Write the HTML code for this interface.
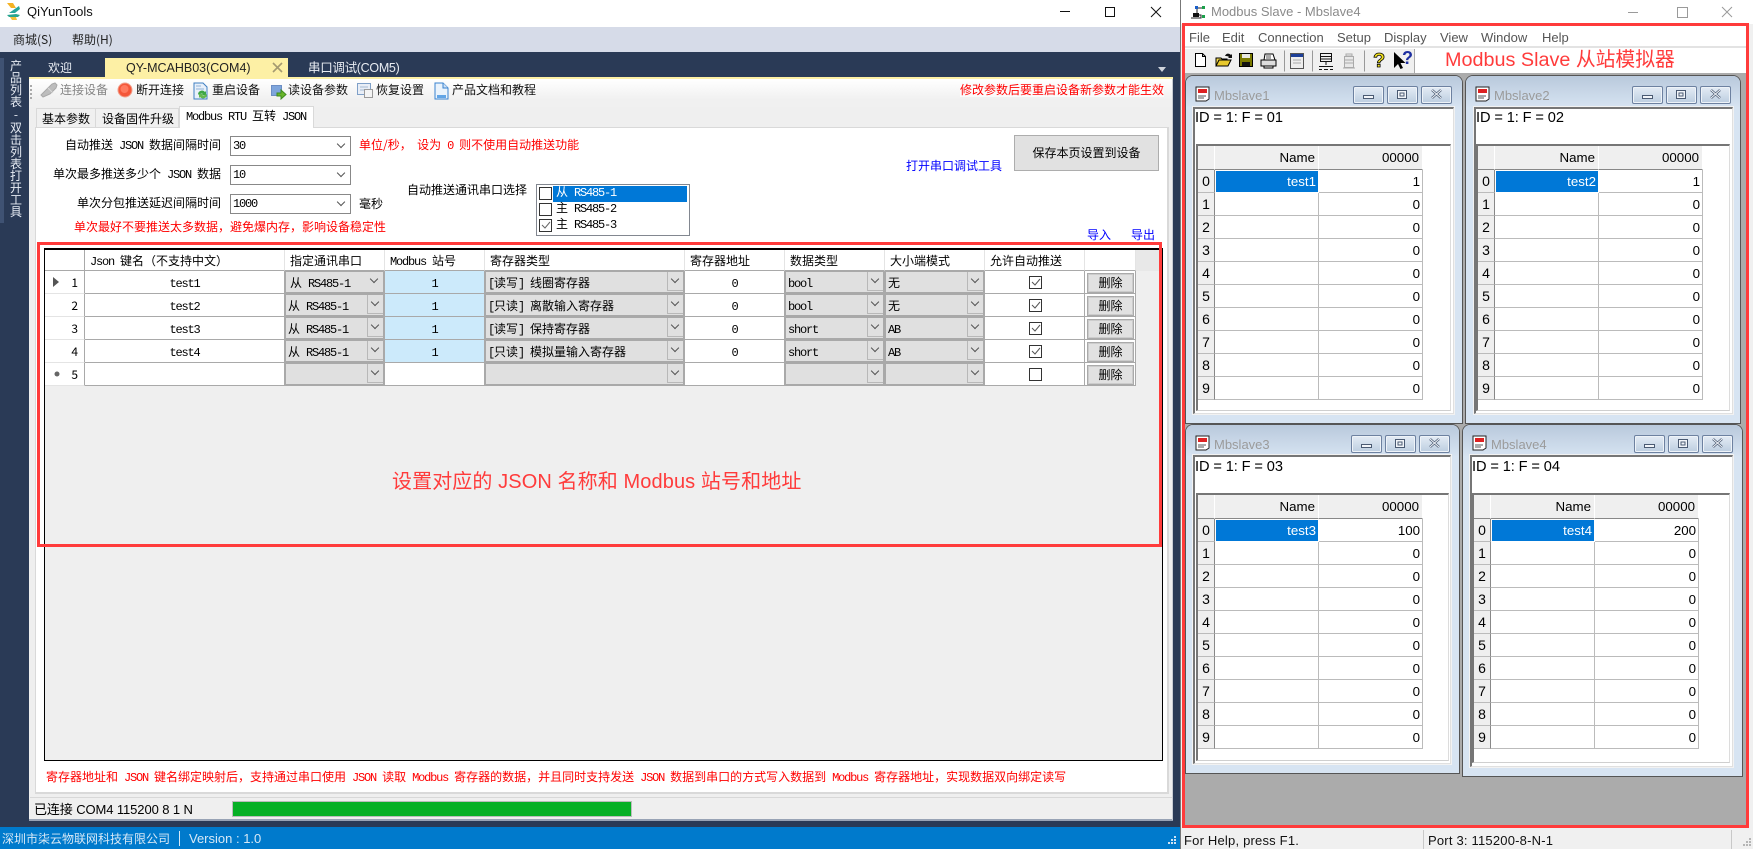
<!DOCTYPE html>
<html><head><meta charset="utf-8"><title>QiYunTools</title>
<style>
html,body{margin:0;padding:0;width:1753px;height:849px;overflow:hidden;background:#fff}
body{position:relative;font-family:"Liberation Sans","WenQuanYi Zen Hei","Noto Sans CJK SC",sans-serif;font-size:12px;color:#000}
.a{position:absolute}
.t{position:absolute;white-space:pre;line-height:14px;font-family:"WenQuanYi Zen Hei","Noto Sans CJK SC",sans-serif;font-size:12px}
.t i,td i{font-style:normal;font-family:"Liberation Mono",monospace;letter-spacing:-1.2px;white-space:pre}
.r{color:#f00}.b{color:#00f}
.cb{position:absolute;background:#fff;border:1px solid #888;box-sizing:border-box}
.cb:after,.dd:after{content:"";position:absolute;width:5px;height:5px;border-right:1px solid #555;border-bottom:1px solid #555;transform:rotate(45deg)}
.cb:after{right:6px;top:4px}
.chk{position:absolute;width:13px;height:13px;box-sizing:border-box;border:1px solid #333;background:#fff}
.chk svg{position:absolute;left:0;top:0}
#grid{position:absolute;left:45px;top:250px;border-collapse:separate;border-spacing:0;table-layout:fixed;background:#fff;font-family:"WenQuanYi Zen Hei","Noto Sans CJK SC",sans-serif;font-size:12px}
#grid td{box-sizing:border-box;height:23px;padding:1px 0 0;border-right:1px solid #a9a9a9;border-bottom:1px solid #a9a9a9;position:relative;white-space:pre;text-align:center}
#grid tr.h td{height:21px;text-align:left;padding:0 0 0 5px;border-right:1px solid #e4e4e4;border-bottom:1px solid #a9a9a9}
#grid td.n{border-right:1px solid #a9a9a9;border-bottom:1px solid #e4e4e4;text-align:right;padding:0 6px 0 0}
#grid td.bl{background:#cceafb}
#grid td.c{background:#e0e0e0;border:2px solid #a9a9a9;border-left-width:1px;border-top-width:1px;text-align:left;padding:0 0 0 2px}
.dd{position:absolute;right:0;top:0;width:16px;height:19px;border-left:1px solid #b8b8b8;border-bottom:1px solid #b8b8b8;box-sizing:border-box}
.dd:after{left:4px;top:4px}
.del{position:absolute;left:2px;top:2px;width:47px;height:20px;box-sizing:border-box;background:#e1e1e1;border:1px solid #aaa;outline:1px solid #ccc;outline-offset:-2px;line-height:18px;text-align:center}
.ic{position:absolute}
.w{position:absolute;background:#d7e4f2;box-sizing:border-box;border:1px solid #555;border-radius:8px 8px 0 0;overflow:hidden}
.tb{position:absolute;left:0;right:0;top:0;height:32px;background:linear-gradient(#b9c9dc,#d7e4f2)}
.wt{position:absolute;font:13px/16px "Liberation Sans",sans-serif;color:#9b9b9b;white-space:pre}
.wb{position:absolute;width:31px;height:18px;top:10px;box-sizing:border-box;border:1px solid #6d81a0;border-radius:2px;background:linear-gradient(#e4ecf5,#bccde0);box-shadow:inset 0 0 0 1px #eef3f8}
.wb svg{position:absolute;left:0;top:0}
.cl{position:absolute;background:#fff;box-sizing:border-box;border-left:2px solid #767676;border-top:2px solid #767676;border-right:1px solid #e0e0e0;border-bottom:1px solid #e0e0e0;outline:1px solid #f2f2f2}
.fr{position:absolute;box-sizing:border-box;border-left:2px solid #767676;border-top:2px solid #767676;border-right:1px solid #dcdcdc;border-bottom:1px solid #cfcfcf;background:#fff}
.id{position:absolute;font:14.6px/18px "Liberation Sans",sans-serif;white-space:pre;letter-spacing:-.1px}
.sg{position:absolute;border-collapse:separate;border-spacing:0;table-layout:fixed;font:13.3px "Liberation Sans",sans-serif}
.sg td{box-sizing:border-box;height:23px;padding:0 2px 0 0;border-right:1px solid #bbb;border-bottom:1px solid #bbb;text-align:right;background:#fff}
.sg td.hd{background:#efefef;padding-right:3px;border-right:1px solid #fff;border-bottom:1px solid #888}
.sg tr.hr td{height:24px}
.sg td.nm{background:#efefef;text-align:center;padding:0;font-size:14px;border-right:1px solid #888;border-bottom:1px solid #bbb}
.sg td.se{background:#0078d7;color:#fff;border:1px solid #fff}
</style></head><body>

<!-- LEFT APP -->
<div class="a" style="left:0;top:0;width:1180px;height:27px;background:#fff"></div>
<svg class="ic" style="left:6px;top:3px" width="15" height="17" viewBox="0 0 15 17"><path d="M1 0h6l3 5H5z" fill="#f5b223"/><path d="M13 3L3 10h6l5-4z" fill="#26a59a"/><path d="M1 12l9-1 4 1-2 2H3z" fill="#2aa58f"/><path d="M4 14l6 0 1 3H6z" fill="#f2c037"/></svg>
<div class="a" style="left:27px;top:4px;font:13px/16px 'Liberation Sans',sans-serif;color:#111;white-space:pre">QiYunTools</div>
<svg class="ic" style="left:1055px;top:3px" width="115" height="18" viewBox="0 0 115 18" fill="none" stroke="#111"><path d="M5 8.500h10"/><rect x="50.500" y="4.500" width="9" height="9"/><path d="M96 4l10 10M106 4l-10 10"/></svg>

<div class="a" style="left:0;top:27px;width:1180px;height:25px;background:#d6dbe8"></div>
<div class="t" style="left:13px;top:33px;color:#222">商城(S)</div>
<div class="t" style="left:72px;top:33px;color:#222">帮助(H)</div>

<div class="a" style="left:0;top:52px;width:1180px;height:775px;background:#2a3a56"></div>
<div class="a" style="left:0;top:58px;width:4px;height:165px;background:#3f5273"></div>
<div class="t" style="left:9px;top:60px;width:14px;white-space:normal;line-height:12px;color:#e6ebf3;text-align:center">产品列表</div>
<div class="t" style="left:9px;top:108px;width:14px;line-height:14px;color:#e6ebf3;text-align:center">-</div>
<div class="t" style="left:9px;top:122px;width:14px;white-space:normal;line-height:12px;color:#e6ebf3;text-align:center">双击列表打开工具</div>

<div class="t" style="left:48px;top:61px;color:#e8ecf2">欢迎</div>
<div class="a" style="left:105px;top:58px;width:183px;height:20px;background:#fdf0a5"></div>
<div class="a" style="left:126px;top:60px;font:12.5px/16px 'Liberation Sans',sans-serif;color:#222;white-space:pre">QY-MCAHB03(COM4)</div>
<svg class="ic" style="left:272px;top:62px" width="11" height="11" viewBox="0 0 11 11" stroke="#a59a70" stroke-width="1.6"><path d="M1 1l9 9M10 1l-9 9"/></svg>
<div class="a" style="left:308px;top:60px;font:12.5px/16px 'Liberation Sans','WenQuanYi Zen Hei',sans-serif;color:#e8ecf2;white-space:pre;letter-spacing:-.3px">串口调试(COM5)</div>
<svg class="ic" style="left:1157px;top:67px" width="10" height="6"><path d="M1 0h8l-4 5z" fill="#cfd4dc"/></svg>

<div class="a" style="left:29px;top:77px;width:1144px;height:743px;background:#efefef;border-top:2px solid #fdf0a5;box-sizing:border-box"></div>
<div class="a" style="left:29px;top:79px;width:1144px;height:28px;background:linear-gradient(#fff,#f0f0f0 75%)"></div>
<div class="a" style="left:29px;top:819px;width:1144px;height:2px;background:#98a3b5"></div>
<div class="a" style="left:1172px;top:79px;width:1px;height:741px;background:#c8ccd3"></div>
<div class="a" style="left:30px;top:85px;width:2px;height:14px;border-left:2px dotted #aaa"></div>

<svg class="ic" style="left:40px;top:82px" width="19" height="17" viewBox="0 0 19 17"><path d="M3 15L1 13l5-5 3-3 3-3 3-1 2 2-1 3-3 3-3 3z" fill="#bdbdbd" stroke="#a8a8a8"/><path d="M8 6l5 5" stroke="#d8d8d8"/></svg>
<div class="t" style="left:60px;top:83px;color:#858585">连接设备</div>
<svg class="ic" style="left:117px;top:82px" width="16" height="16"><circle cx="8" cy="8" r="7" fill="#f4573a" stroke="#f1a08c"/><circle cx="7.500" cy="7" r="4" fill="#ff7a5f"/></svg>
<div class="t" style="left:136px;top:83px;color:#111">断开连接</div>
<svg class="ic" style="left:193px;top:82px" width="16" height="18" viewBox="0 0 16 18"><path d="M1 1h9l4 4v12H1z" fill="#e8f0fa" stroke="#3f7fc2"/><path d="M3 4h5M3 7h8" stroke="#8fb2d8"/><path d="M5 12a4 4 0 017-2l1-1v4H9l1-1a3 3 0 00-4 1z" fill="#3da744"/><path d="M14 13a4 4 0 01-7 2l-1 1v-4h4l-1 1a3 3 0 004-1z" fill="#64b84d"/></svg>
<div class="t" style="left:212px;top:83px;color:#111">重启设备</div>
<svg class="ic" style="left:271px;top:84px" width="16" height="16" viewBox="0 0 16 16"><rect x="0.500" y="1.500" width="10" height="10" fill="#7ea5dc" stroke="#6c8ec4"/><path d="M6 9h4V6l5 4.500-5 4.500v-3H6z" fill="#69b52a" stroke="#3d8b1e"/></svg>
<div class="t" style="left:288px;top:83px;color:#111">读设备参数</div>
<svg class="ic" style="left:357px;top:82px" width="17" height="17" viewBox="0 0 17 17"><rect x="0.500" y="1.500" width="13" height="11" fill="#e9eef6" stroke="#7fa0c8"/><path d="M3 5h8M3 8h5" stroke="#a5bad3"/><rect x="7.500" y="7.500" width="8" height="8" fill="#f4f4f4" stroke="#9a9a9a"/></svg>
<div class="t" style="left:376px;top:83px;color:#111">恢复设置</div>
<svg class="ic" style="left:434px;top:82px" width="15" height="18" viewBox="0 0 15 18"><path d="M1 1h8l5 5v11H1z" fill="#eaf3fc" stroke="#3a83cf"/><path d="M9 1v5h5" fill="#cfe2f6" stroke="#3a83cf"/><path d="M3 13h9v3H3z" fill="#62a5e6"/></svg>
<div class="t" style="left:452px;top:83px;color:#111">产品文档和教程</div>
<div class="t r" style="left:960px;top:83px;background:#fbfbfb">修改参数后要重启设备新参数才能生效</div>

<!-- tabs -->
<div class="a" style="left:35px;top:127px;width:1134px;height:667px;background:#fff;border:1px solid #d9d9d9;box-sizing:border-box;border-width:1px 2px 2px 1px"></div>
<div class="a" style="left:36px;top:108px;width:60px;height:19px;background:#f0f0f0;border:1px solid #d9d9d9;border-bottom:0;box-sizing:border-box"></div>
<div class="a" style="left:96px;top:108px;width:83px;height:19px;background:#f0f0f0;border:1px solid #d9d9d9;border-left:0;border-bottom:0;box-sizing:border-box"></div>
<div class="a" style="left:179px;top:106px;width:135px;height:22px;background:#fff;border:1px solid #d9d9d9;border-bottom:0;box-sizing:border-box"></div>
<div class="t" style="left:42px;top:112px">基本参数</div>
<div class="t" style="left:102px;top:112px">设备固件升级</div>
<div class="t" style="left:186px;top:109px"><i>Modbus RTU </i>互转<i> JSON</i></div>

<!-- form -->
<div class="t" style="left:65px;top:138px"><span>自动推送</span><i> JSON </i>数据间隔时间</div>
<div class="t" style="left:53px;top:167px">单次最多推送多少个<i> JSON </i>数据</div>
<div class="t" style="left:77px;top:196px">单次分包推送延迟间隔时间</div>
<div class="cb" style="left:230px;top:136px;width:121px;height:20px"></div>
<div class="cb" style="left:230px;top:165px;width:121px;height:20px"></div>
<div class="cb" style="left:230px;top:194px;width:121px;height:20px"></div>
<div class="t" style="left:233px;top:138px"><i>30</i></div>
<div class="t" style="left:233px;top:167px"><i>10</i></div>
<div class="t" style="left:233px;top:196px"><i>1000</i></div>
<div class="t r" style="left:359px;top:138px">单位/秒，  设为<i> 0 </i>则不使用自动推送功能</div>
<div class="t" style="left:359px;top:197px">毫秒</div>
<div class="t r" style="left:74px;top:220px">单次最好不要推送太多数据，避免爆内存，影响设备稳定性</div>
<div class="t" style="left:407px;top:183px">自动推送通讯串口选择</div>

<div class="a" style="left:536px;top:184px;width:154px;height:52px;background:#fff;border:1px solid #828790;box-sizing:border-box"></div>
<div class="a" style="left:553px;top:186px;width:134px;height:16px;background:#0078d7"></div>
<div class="chk" style="left:539px;top:187px"></div>
<div class="chk" style="left:539px;top:203px"></div>
<div class="chk" style="left:539px;top:219px"><svg width="11" height="11"><path d="M2 5l3 3 5-6" fill="none" stroke="#666"/></svg></div>
<div class="t" style="left:556px;top:185px;color:#fff">从<i> RS485-1</i></div>
<div class="t" style="left:556px;top:201px">主<i> RS485-2</i></div>
<div class="t" style="left:556px;top:217px">主<i> RS485-3</i></div>

<div class="t b" style="left:906px;top:159px">打开串口调试工具</div>
<div class="a" style="left:1014px;top:135px;width:145px;height:36px;background:#e1e1e1;border:1px solid #adadad;box-sizing:border-box;outline:0;text-align:center;line-height:34px;font-family:'WenQuanYi Zen Hei','Noto Sans CJK SC',sans-serif">保存本页设置到设备</div>
<div class="t b" style="left:1087px;top:228px">导入</div>
<div class="t b" style="left:1131px;top:228px">导出</div>

<!-- grid -->
<div class="a" style="left:44px;top:248px;width:1119px;height:513px;background:#efefef;border:1px solid #000;border-top-width:2px;box-sizing:border-box"></div>
<div class="a" style="left:1136px;top:250px;width:26px;height:21px;background:#e8e8e8"></div>
<table id="grid"><colgroup><col style="width:40px"><col style="width:200px"><col style="width:100px"><col style="width:100px"><col style="width:200px"><col style="width:100px"><col style="width:100px"><col style="width:100px"><col style="width:100px"><col style="width:51px"></colgroup>
<tr class="h"><td style="border-right-color:#a9a9a9"></td><td><i>Json </i>键名（不支持中文）</td><td>指定通讯串口</td><td><i>Modbus </i>站号</td><td>寄存器类型</td><td>寄存器地址</td><td>数据类型</td><td>大小端模式</td><td>允许自动推送</td><td></td></tr>
<tr><td class="n">1<svg class="ic" style="left:8px;top:6px" width="7" height="10"><path d="M0 0l6 5-6 5z" fill="#555"/></svg></td><td><i>test1</i></td><td class="c" style="padding-left:4px;border-bottom-color:#a9a9a9">从<i> RS485-1</i><span class="dd" style="border:0"></span></td><td class="bl"><i>1</i></td><td class="c"><i>[</i>读写<i>] </i>线圈寄存器<span class="dd"></span></td><td><i>0</i></td><td class="c"><i>bool</i><span class="dd"></span></td><td class="c">无<span class="dd"></span></td><td><div class="chk" style="left:44px;top:5px"><svg width="11" height="11"><path d="M2 5l3 3 5-6" fill="none" stroke="#555"/></svg></div></td><td><div class="del">删除</div></td></tr>
<tr><td class="n">2</td><td><i>test2</i></td><td class="c">从<i> RS485-1</i><span class="dd"></span></td><td class="bl"><i>1</i></td><td class="c"><i>[</i>只读<i>] </i>离散输入寄存器<span class="dd"></span></td><td><i>0</i></td><td class="c"><i>bool</i><span class="dd"></span></td><td class="c">无<span class="dd"></span></td><td><div class="chk" style="left:44px;top:5px"><svg width="11" height="11"><path d="M2 5l3 3 5-6" fill="none" stroke="#555"/></svg></div></td><td><div class="del">删除</div></td></tr>
<tr><td class="n">3</td><td><i>test3</i></td><td class="c">从<i> RS485-1</i><span class="dd"></span></td><td class="bl"><i>1</i></td><td class="c"><i>[</i>读写<i>] </i>保持寄存器<span class="dd"></span></td><td><i>0</i></td><td class="c"><i>short</i><span class="dd"></span></td><td class="c"><i>AB</i><span class="dd"></span></td><td><div class="chk" style="left:44px;top:5px"><svg width="11" height="11"><path d="M2 5l3 3 5-6" fill="none" stroke="#555"/></svg></div></td><td><div class="del">删除</div></td></tr>
<tr><td class="n">4</td><td><i>test4</i></td><td class="c">从<i> RS485-1</i><span class="dd"></span></td><td class="bl"><i>1</i></td><td class="c"><i>[</i>只读<i>] </i>模拟量输入寄存器<span class="dd"></span></td><td><i>0</i></td><td class="c"><i>short</i><span class="dd"></span></td><td class="c"><i>AB</i><span class="dd"></span></td><td><div class="chk" style="left:44px;top:5px"><svg width="11" height="11"><path d="M2 5l3 3 5-6" fill="none" stroke="#555"/></svg></div></td><td><div class="del">删除</div></td></tr>
<tr><td class="n" style="border-bottom-color:#e4e4e4">5<svg class="ic" style="left:9px;top:8px" width="6" height="6"><circle cx="3" cy="3" r="2.500" fill="#666"/></svg></td><td></td><td class="c"><span class="dd"></span></td><td></td><td class="c"><span class="dd"></span></td><td></td><td class="c"><span class="dd"></span></td><td class="c"><span class="dd"></span></td><td><div class="chk" style="left:44px;top:5px"></div></td><td><div class="del">删除</div></td></tr>
</table>

<div class="a" style="left:392px;top:469px;font:20px/26px 'Liberation Sans','Noto Sans CJK SC',sans-serif;color:#ff3b3b;white-space:pre;letter-spacing:.1px">设置对应的 JSON 名称和 Modbus 站号和地址</div>
<div class="a" style="left:37px;top:242px;width:1125px;height:305px;border:3px solid #ff3b3b;box-sizing:border-box"></div>

<div class="t r" style="left:46px;top:770px">寄存器地址和<i> JSON </i>键名绑定映射后，支持通过串口使用<i> JSON </i>读取<i> Modbus </i>寄存器的数据，并且同时支持发送<i> JSON </i>数据到串口的方式写入数据到<i> Modbus </i>寄存器地址，实现数据双向绑定读写</div>

<!-- status -->
<div class="a" style="left:30px;top:797px;width:1142px;height:1px;background:#d8d8d8"></div>
<div class="a" style="left:34px;top:802px;font:13px/16px 'Liberation Sans','WenQuanYi Zen Hei',sans-serif;white-space:pre;letter-spacing:-.1px">已连接 COM4 115200 8 1 N</div>
<div class="a" style="left:232px;top:801px;width:400px;height:16px;background:#06b025;border:1px solid #bcbcbc;box-sizing:border-box"></div>

<div class="a" style="left:0;top:827px;width:1180px;height:22px;background:#007acc"></div>
<div class="a" style="left:2px;top:831px;font:12px/16px 'Liberation Sans','WenQuanYi Zen Hei',sans-serif;color:#d6e8f6;white-space:pre">深圳市柒云物联网科技有限公司</div>
<div class="a" style="left:179px;top:831px;width:1px;height:15px;background:#d6e8f6"></div>
<div class="a" style="left:189px;top:831px;font:13px/16px 'Liberation Sans',sans-serif;color:#d6e8f6;white-space:pre">Version : 1.0</div>
<svg class="ic" style="left:1167px;top:836px" width="10" height="10" fill="#cfe3f3"><rect x="7" y="0" width="2" height="2"/><rect x="4" y="3" width="2" height="2"/><rect x="7" y="3" width="2" height="2"/><rect x="1" y="6" width="2" height="2"/><rect x="4" y="6" width="2" height="2"/><rect x="7" y="6" width="2" height="2"/></svg>

<!-- RIGHT APP -->
<div class="a" style="left:1180px;top:0;width:573px;height:849px;background:#f0f0f0;border-left:1px solid #777;box-sizing:border-box"></div>
<div class="a" style="left:1181px;top:0;width:572px;height:24px;background:#fff"></div>
<svg class="ic" style="left:1190px;top:5px" width="15" height="14" viewBox="0 0 15 14"><path d="M1 13h10V10H7V3h6" fill="none" stroke="#222"/><rect x="3" y="8" width="6" height="4" fill="#111"/><rect x="5" y="1" width="3" height="3" fill="#1a5fc9"/><rect x="12" y="1" width="3" height="3" fill="#1aa04a"/><rect x="12" y="10" width="3" height="3" fill="#1aa04a"/></svg>
<div class="a" style="left:1211px;top:4px;font:13px/16px 'Liberation Sans',sans-serif;color:#8a8a8a;white-space:pre">Modbus Slave - Mbslave4</div>
<svg class="ic" style="left:1625px;top:3px" width="115" height="18" viewBox="0 0 115 18" fill="none" stroke="#9a9a9a"><path d="M3 9.500h10"/><rect x="52.500" y="4.500" width="10" height="10"/><path d="M97 4l10 10M107 4l-10 10"/></svg>

<div class="a" style="left:1182px;top:24px;width:567px;height:22px;background:#fff"></div>
<div class="a" style="left:1182px;top:46px;width:567px;height:2px;background:#e3e3e3"></div>
<div class="a" style="left:1182px;top:48px;width:567px;height:26px;background:#fff"></div>
<div class="a" style="left:1185px;top:49px;width:229px;height:24px;background:#f0f0f0;border-right:1px solid #aaa"></div>
<div class="a" style="left:1182px;top:73px;width:567px;height:754px;background:#ababab"></div>
<div class="a" style="left:1189px;top:30px;font:13px/16px 'Liberation Sans',sans-serif;color:#555;white-space:pre">File</div>
<div class="a" style="left:1222px;top:30px;font:13px/16px 'Liberation Sans',sans-serif;color:#555;white-space:pre">Edit</div>
<div class="a" style="left:1258px;top:30px;font:13px/16px 'Liberation Sans',sans-serif;color:#555;white-space:pre">Connection</div>
<div class="a" style="left:1337px;top:30px;font:13px/16px 'Liberation Sans',sans-serif;color:#555;white-space:pre">Setup</div>
<div class="a" style="left:1384px;top:30px;font:13px/16px 'Liberation Sans',sans-serif;color:#555;white-space:pre">Display</div>
<div class="a" style="left:1440px;top:30px;font:13px/16px 'Liberation Sans',sans-serif;color:#555;white-space:pre">View</div>
<div class="a" style="left:1481px;top:30px;font:13px/16px 'Liberation Sans',sans-serif;color:#555;white-space:pre">Window</div>
<div class="a" style="left:1542px;top:30px;font:13px/16px 'Liberation Sans',sans-serif;color:#555;white-space:pre">Help</div>

<svg class="ic" style="left:1185px;top:49px" width="228" height="24" viewBox="0 0 228 24" fill="none">
<path d="M10.500 4.500h7l3 3v10h-10zM17.500 4.500v3h3" fill="#fff" stroke="#000"/>
<path d="M31 17V9h5l1 1h5v2" fill="#f2d94a" stroke="#000"/><path d="M31 17l3-6h12l-3 6z" fill="#e8c92e" stroke="#000"/><path d="M40 7c1-3 4-3 6-1l1-1v4h-4l1-1c-1-1-3-1-4-1z" fill="#111"/>
<rect x="54.500" y="4.500" width="13" height="13" fill="#7a7a00" stroke="#000"/><rect x="57" y="5" width="8" height="4" fill="#e8e8e0"/><rect x="57" y="13" width="8" height="4" fill="#111"/>
<path d="M76 11h15v6H76z" fill="#ddd" stroke="#000"/><path d="M79 11l1-6h8l2 6z" fill="#fff" stroke="#000"/><path d="M79 17h9v2h-9z" fill="#fff" stroke="#000"/><path d="M81 7h5M81 9h5" stroke="#555"/>
<path d="M99.500 1.500v21" stroke="#999"/>
<rect x="105.500" y="4.500" width="13" height="15" fill="#eee" stroke="#555"/><rect x="106" y="5" width="12" height="3" fill="#1d3f98"/><path d="M108 11h8M108 14h8" stroke="#aaa"/>
<path d="M127.500 1.500v21" stroke="#999"/>
<path d="M135.500 4.500h11v8h-11zM136 7.500h10M136 10h10M141 13v3M134 17.500h14" stroke="#111"/><path d="M134 20.500h3M139 20.500h4M145 20.500h3" stroke="#111"/>
<rect x="159.500" y="7.500" width="9" height="11" fill="#e8e8e8" stroke="#aaa"/><path d="M161 5h6v2h-6zM160 11h8M160 14h8M158 19h12" stroke="#aaa"/>
<path d="M179.500 1.500v21" stroke="#999"/>
<text x="188" y="18" font-family="Liberation Sans" font-weight="700" font-size="20" fill="#f0e020" stroke="#000" stroke-width=".8">?</text>
<path d="M209 3v16l4-4 2.500 5 2.500-1-2.500-5h5z" fill="#000"/><text x="217" y="15" font-family="Liberation Sans" font-weight="700" font-size="18" fill="#1d2fa0">?</text>
</svg>

<div class="a" style="left:1445px;top:47px;font:19.800px/26px 'Liberation Sans','Noto Sans CJK SC',sans-serif;color:#ff3b3b;white-space:pre">Modbus Slave 从站模拟器</div>

<!-- Mbslave1 -->
<div class="w" style="left:1185px;top:75px;width:278px;height:349px"><div class="tb"></div>
<svg class="ic" style="left:9px;top:10px" width="15" height="16" viewBox="0 0 15 16"><path d="M1 1h13v12l-3 2H1z" fill="#fff" stroke="#222"/><rect x="3" y="3" width="9" height="4" fill="#d22"/><path d="M3 10h8M3 12h6" stroke="#555"/></svg>
<div class="wt" style="left:28px;top:12px">Mbslave1</div>
<div class="wb" style="left:167px"><svg width="29" height="16"><rect x="9.500" y="8.500" width="10" height="3" fill="#f2f5f9" stroke="#4a5a72"/></svg></div>
<div class="wb" style="left:201px"><svg width="29" height="16"><rect x="9.500" y="3.500" width="9" height="8" fill="#f2f5f9" stroke="#4a5a72"/><rect x="12" y="6" width="4" height="3" fill="none" stroke="#4a5a72"/></svg></div>
<div class="wb" style="left:235px"><svg width="29" height="16"><path d="M10 3l9 8M19 3l-9 8" stroke="#4a5a72" stroke-width="2.500"/><path d="M10 3l9 8M19 3l-9 8" stroke="#f2f5f9"/></svg></div>
<div class="cl" style="left:7px;top:31px;width:261px;height:307px"></div>
<div class="id" style="left:9px;top:33px">ID = 1: F = 01</div>
<div class="fr" style="left:10px;top:68px;width:255px;height:267px"></div>
<table class="sg" style="left:12px;top:70px"><colgroup><col style="width:17px"><col style="width:104px"><col style="width:104px"></colgroup>
<tr class="hr"><td class="hd"></td><td class="hd">Name</td><td class="hd">00000</td></tr>
<tr><td class="nm">0</td><td class="se">test1</td><td>1</td></tr>
<tr><td class="nm">1</td><td></td><td>0</td></tr><tr><td class="nm">2</td><td></td><td>0</td></tr><tr><td class="nm">3</td><td></td><td>0</td></tr><tr><td class="nm">4</td><td></td><td>0</td></tr><tr><td class="nm">5</td><td></td><td>0</td></tr><tr><td class="nm">6</td><td></td><td>0</td></tr><tr><td class="nm">7</td><td></td><td>0</td></tr><tr><td class="nm">8</td><td></td><td>0</td></tr><tr><td class="nm">9</td><td></td><td>0</td></tr>
</table></div>

<!-- Mbslave2 -->
<div class="w" style="left:1465px;top:75px;width:276px;height:349px"><div class="tb"></div>
<svg class="ic" style="left:9px;top:10px" width="15" height="16" viewBox="0 0 15 16"><path d="M1 1h13v12l-3 2H1z" fill="#fff" stroke="#222"/><rect x="3" y="3" width="9" height="4" fill="#d22"/><path d="M3 10h8M3 12h6" stroke="#555"/></svg>
<div class="wt" style="left:28px;top:12px">Mbslave2</div>
<div class="wb" style="left:166px"><svg width="29" height="16"><rect x="9.500" y="8.500" width="10" height="3" fill="#f2f5f9" stroke="#4a5a72"/></svg></div>
<div class="wb" style="left:200px"><svg width="29" height="16"><rect x="9.500" y="3.500" width="9" height="8" fill="#f2f5f9" stroke="#4a5a72"/><rect x="12" y="6" width="4" height="3" fill="none" stroke="#4a5a72"/></svg></div>
<div class="wb" style="left:234px"><svg width="29" height="16"><path d="M10 3l9 8M19 3l-9 8" stroke="#4a5a72" stroke-width="2.500"/><path d="M10 3l9 8M19 3l-9 8" stroke="#f2f5f9"/></svg></div>
<div class="cl" style="left:8px;top:31px;width:259px;height:307px"></div>
<div class="id" style="left:10px;top:33px">ID = 1: F = 02</div>
<div class="fr" style="left:10px;top:68px;width:254px;height:267px"></div>
<table class="sg" style="left:12px;top:70px"><colgroup><col style="width:17px"><col style="width:104px"><col style="width:104px"></colgroup>
<tr class="hr"><td class="hd"></td><td class="hd">Name</td><td class="hd">00000</td></tr>
<tr><td class="nm">0</td><td class="se">test2</td><td>1</td></tr>
<tr><td class="nm">1</td><td></td><td>0</td></tr><tr><td class="nm">2</td><td></td><td>0</td></tr><tr><td class="nm">3</td><td></td><td>0</td></tr><tr><td class="nm">4</td><td></td><td>0</td></tr><tr><td class="nm">5</td><td></td><td>0</td></tr><tr><td class="nm">6</td><td></td><td>0</td></tr><tr><td class="nm">7</td><td></td><td>0</td></tr><tr><td class="nm">8</td><td></td><td>0</td></tr><tr><td class="nm">9</td><td></td><td>0</td></tr>
</table></div>

<!-- Mbslave3 -->
<div class="w" style="left:1185px;top:424px;width:275px;height:350px"><div class="tb"></div>
<svg class="ic" style="left:9px;top:10px" width="15" height="16" viewBox="0 0 15 16"><path d="M1 1h13v12l-3 2H1z" fill="#fff" stroke="#222"/><rect x="3" y="3" width="9" height="4" fill="#d22"/><path d="M3 10h8M3 12h6" stroke="#555"/></svg>
<div class="wt" style="left:28px;top:12px">Mbslave3</div>
<div class="wb" style="left:165px"><svg width="29" height="16"><rect x="9.500" y="8.500" width="10" height="3" fill="#f2f5f9" stroke="#4a5a72"/></svg></div>
<div class="wb" style="left:199px"><svg width="29" height="16"><rect x="9.500" y="3.500" width="9" height="8" fill="#f2f5f9" stroke="#4a5a72"/><rect x="12" y="6" width="4" height="3" fill="none" stroke="#4a5a72"/></svg></div>
<div class="wb" style="left:233px"><svg width="29" height="16"><path d="M10 3l9 8M19 3l-9 8" stroke="#4a5a72" stroke-width="2.500"/><path d="M10 3l9 8M19 3l-9 8" stroke="#f2f5f9"/></svg></div>
<div class="cl" style="left:7px;top:30px;width:258px;height:309px"></div>
<div class="id" style="left:9px;top:33px">ID = 1: F = 03</div>
<div class="fr" style="left:10px;top:68px;width:253px;height:268px"></div>
<table class="sg" style="left:12px;top:70px"><colgroup><col style="width:17px"><col style="width:104px"><col style="width:104px"></colgroup>
<tr class="hr"><td class="hd"></td><td class="hd">Name</td><td class="hd">00000</td></tr>
<tr><td class="nm">0</td><td class="se">test3</td><td>100</td></tr>
<tr><td class="nm">1</td><td></td><td>0</td></tr><tr><td class="nm">2</td><td></td><td>0</td></tr><tr><td class="nm">3</td><td></td><td>0</td></tr><tr><td class="nm">4</td><td></td><td>0</td></tr><tr><td class="nm">5</td><td></td><td>0</td></tr><tr><td class="nm">6</td><td></td><td>0</td></tr><tr><td class="nm">7</td><td></td><td>0</td></tr><tr><td class="nm">8</td><td></td><td>0</td></tr><tr><td class="nm">9</td><td></td><td>0</td></tr>
</table></div>

<!-- Mbslave4 -->
<div class="w" style="left:1462px;top:424px;width:281px;height:353px"><div class="tb"></div>
<svg class="ic" style="left:9px;top:10px" width="15" height="16" viewBox="0 0 15 16"><path d="M1 1h13v12l-3 2H1z" fill="#fff" stroke="#222"/><rect x="3" y="3" width="9" height="4" fill="#d22"/><path d="M3 10h8M3 12h6" stroke="#555"/></svg>
<div class="wt" style="left:28px;top:12px">Mbslave4</div>
<div class="wb" style="left:171px"><svg width="29" height="16"><rect x="9.500" y="8.500" width="10" height="3" fill="#f2f5f9" stroke="#4a5a72"/></svg></div>
<div class="wb" style="left:205px"><svg width="29" height="16"><rect x="9.500" y="3.500" width="9" height="8" fill="#f2f5f9" stroke="#4a5a72"/><rect x="12" y="6" width="4" height="3" fill="none" stroke="#4a5a72"/></svg></div>
<div class="wb" style="left:239px"><svg width="29" height="16"><path d="M10 3l9 8M19 3l-9 8" stroke="#4a5a72" stroke-width="2.500"/><path d="M10 3l9 8M19 3l-9 8" stroke="#f2f5f9"/></svg></div>
<div class="cl" style="left:7px;top:30px;width:263px;height:312px"></div>
<div class="id" style="left:9px;top:33px">ID = 1: F = 04</div>
<div class="fr" style="left:9px;top:68px;width:258px;height:270px"></div>
<table class="sg" style="left:11px;top:70px"><colgroup><col style="width:17px"><col style="width:104px"><col style="width:104px"></colgroup>
<tr class="hr"><td class="hd"></td><td class="hd">Name</td><td class="hd">00000</td></tr>
<tr><td class="nm">0</td><td class="se">test4</td><td>200</td></tr>
<tr><td class="nm">1</td><td></td><td>0</td></tr><tr><td class="nm">2</td><td></td><td>0</td></tr><tr><td class="nm">3</td><td></td><td>0</td></tr><tr><td class="nm">4</td><td></td><td>0</td></tr><tr><td class="nm">5</td><td></td><td>0</td></tr><tr><td class="nm">6</td><td></td><td>0</td></tr><tr><td class="nm">7</td><td></td><td>0</td></tr><tr><td class="nm">8</td><td></td><td>0</td></tr><tr><td class="nm">9</td><td></td><td>0</td></tr>
</table></div>

<div class="a" style="left:1182px;top:23px;width:567px;height:805px;border:3px solid #ff3b3b;box-sizing:border-box"></div>
<div class="a" style="left:1184px;top:833px;font:13px/16px 'Liberation Sans',sans-serif;color:#111;white-space:pre;letter-spacing:.2px">For Help, press F1.</div>
<div class="a" style="left:1423px;top:830px;width:1px;height:19px;background:#c8c8c8"></div>
<div class="a" style="left:1428px;top:833px;font:13px/16px 'Liberation Sans',sans-serif;color:#111;white-space:pre;letter-spacing:.2px">Port 3: 115200-8-N-1</div>
<div class="a" style="left:1731px;top:830px;width:1px;height:19px;background:#c8c8c8"></div>
<svg class="ic" style="left:1742px;top:838px" width="10" height="10" fill="#b5b5b5"><rect x="7" y="0" width="2" height="2"/><rect x="4" y="3" width="2" height="2"/><rect x="7" y="3" width="2" height="2"/><rect x="1" y="6" width="2" height="2"/><rect x="4" y="6" width="2" height="2"/><rect x="7" y="6" width="2" height="2"/></svg>
</body></html>
